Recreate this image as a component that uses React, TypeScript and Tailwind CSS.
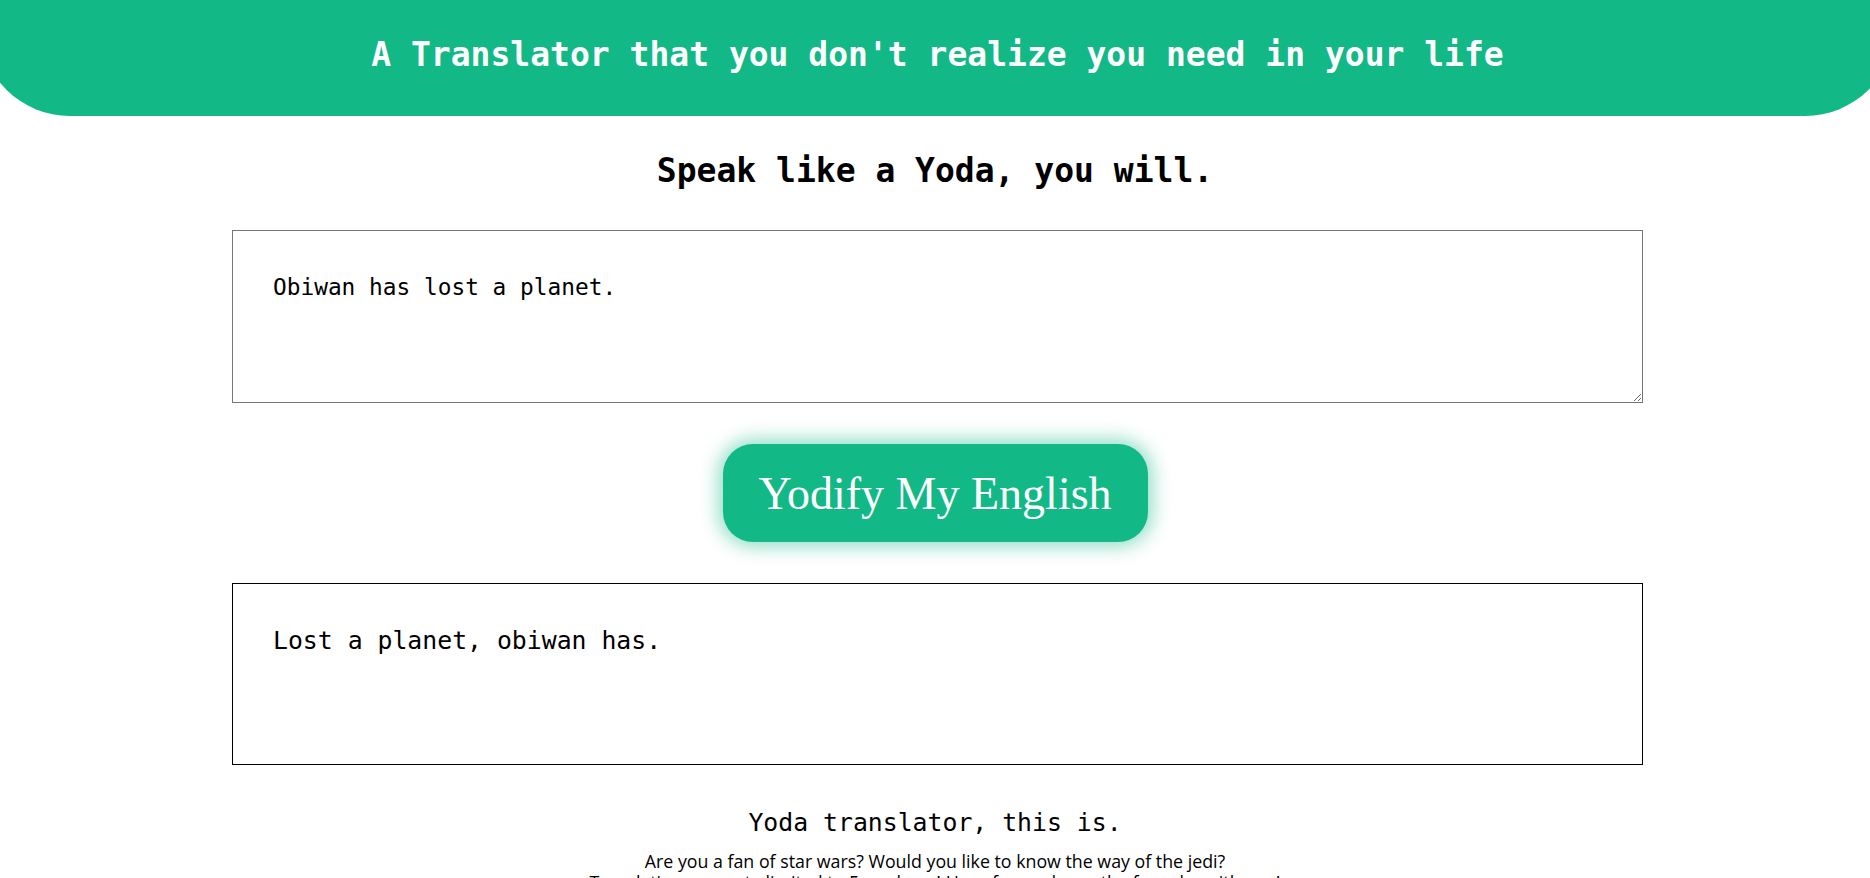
import { useState } from "react";

const monoFont = "font-['DejaVu_Sans_Mono','Liberation_Mono',monospace]";

export default function App() {
  const [input, setInput] = useState("Obiwan has lost a planet.");
  const output = "Lost a planet, obiwan has.";

  return (
    <div className="min-h-screen w-full overflow-hidden bg-white">
      <header className="-ml-[20px] w-[calc(100%+45px)] rounded-b-[90px] bg-[#12b886] pt-[35px] pb-[41px] text-center">
        <h1 className={`${monoFont} text-[33px] leading-[40px] font-bold text-white`}>
          A Translator that you don't realize you need in your life
        </h1>
      </header>

      <main className="flex flex-col items-center">
        <h2 className={`${monoFont} mt-[35px] text-[33px] leading-[40px] font-bold text-black`}>
          Speak like a Yoda, you will.
        </h2>

        <textarea
          value={input}
          onChange={(e) => setInput(e.target.value)}
          spellCheck
          className={`${monoFont} mt-[39px] ml-[5px] h-[173px] w-[1411px] resize border border-[#767676] px-[40px] pt-[40px] text-[22.8px] leading-[32px] text-black outline-none`}
        />

        <button className="mt-[41px] h-[98px] w-[425px] rounded-[30px] bg-[#12b886] font-['Liberation_Serif',serif] text-[46px] text-white shadow-[0_0_18px_5px_rgba(18,184,134,0.45)]">
          Yodify My English
        </button>

        <div
          className={`${monoFont} mt-[41px] ml-[5px] h-[182px] w-[1411px] border border-black px-[40px] pt-[40px] text-[24.8px] leading-[34px] text-black`}
        >
          {output}
        </div>

        <h3 className={`${monoFont} mt-[43px] text-[24.8px] leading-[30px] text-black`}>
          Yoda translator, this is.
        </h3>
        <div className="mt-[13px] text-center font-['Open_Sans',sans-serif] text-[17.8px] leading-[21px] text-black">
          <p>Are you a fan of star wars? Would you like to know the way of the jedi?</p>
          <p>Translations are rate limited to 5 per hour! Have fun and may the force be with you!</p>
        </div>
      </main>
    </div>
  );
}
